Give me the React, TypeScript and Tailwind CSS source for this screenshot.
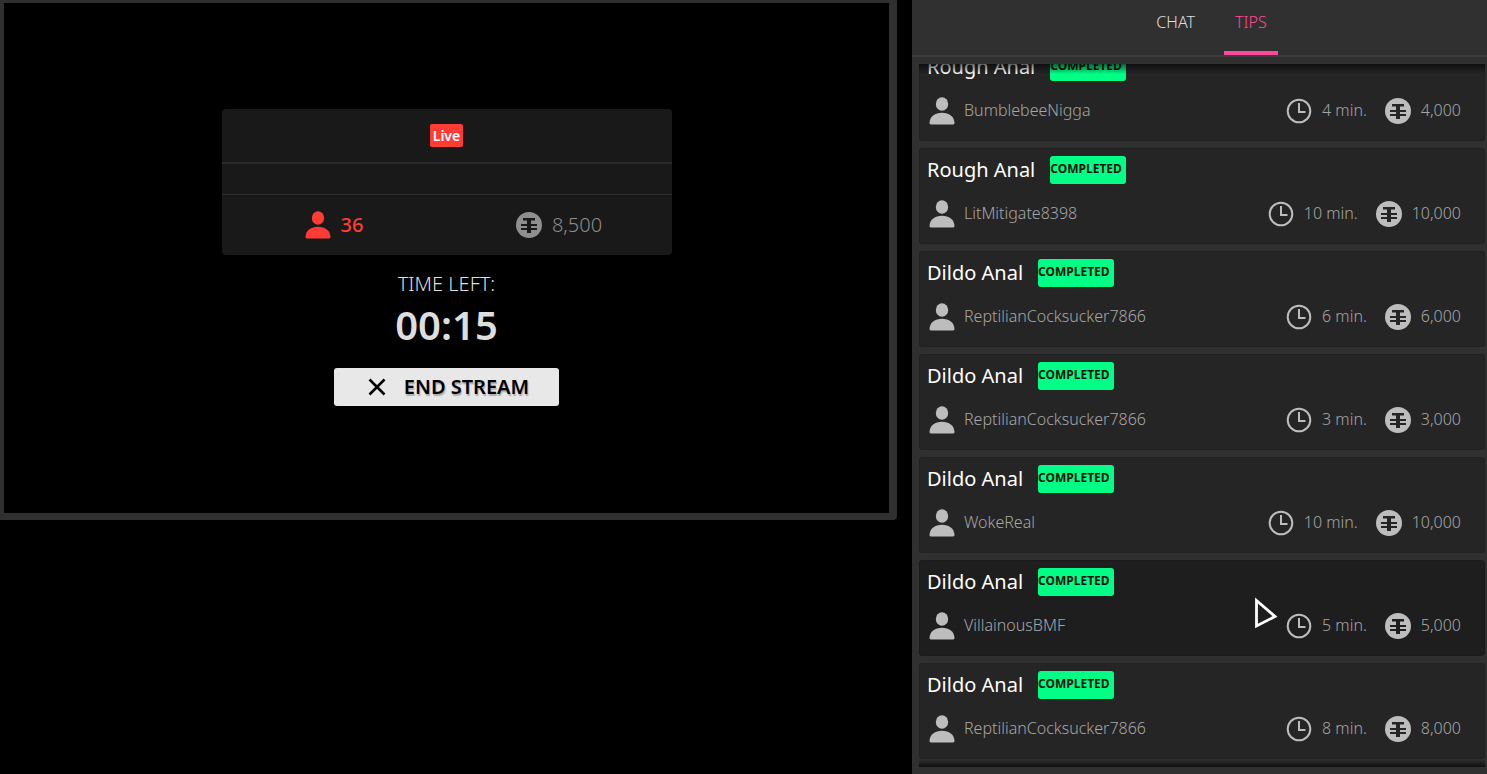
interface Tip {
  id: number
  title: string
  user: string
  minutes: number
  tokens: string
  hovered?: boolean
}

const tips: Tip[] = [
  { id: 1, title: 'Rough Anal', user: 'BumblebeeNigga', minutes: 4, tokens: '4,000' },
  { id: 2, title: 'Rough Anal', user: 'LitMitigate8398', minutes: 10, tokens: '10,000' },
  { id: 3, title: 'Dildo Anal', user: 'ReptilianCocksucker7866', minutes: 6, tokens: '6,000' },
  { id: 4, title: 'Dildo Anal', user: 'ReptilianCocksucker7866', minutes: 3, tokens: '3,000' },
  { id: 5, title: 'Dildo Anal', user: 'WokeReal', minutes: 10, tokens: '10,000' },
  { id: 6, title: 'Dildo Anal', user: 'VillainousBMF', minutes: 5, tokens: '5,000', hovered: true },
  { id: 7, title: 'Dildo Anal', user: 'ReptilianCocksucker7866', minutes: 8, tokens: '8,000' }
]

function UserIcon({ className }: { className: string }) {
  return (
    <svg viewBox="0 0 26 28" className={`h-7 w-[26px] shrink-0 ${className}`} fill="currentColor" aria-hidden="true">
      <ellipse cx="13" cy="7" rx="6.2" ry="6.8" />
      <path d="M.5 26C.8 19.500 6 15.800 13 15.800S25.200 19.500 25.500 26c0 .9-.5 1.400-1.400 1.400H1.900C1 27.400.5 26.900.5 26z" />
    </svg>
  )
}

function ClockIcon() {
  return (
    <svg viewBox="0 0 26 26" className="size-[26px] shrink-0 text-[#bdbdbd]" fill="none" stroke="currentColor" strokeWidth="2" aria-hidden="true">
      <circle cx="13" cy="13" r="11.300" />
      <path d="M13 5v9h6.500" />
    </svg>
  )
}

function TokenIcon({ className, mark }: { className: string; mark: string }) {
  return (
    <svg viewBox="0 0 26 26" className={`size-[26px] shrink-0 ${className}`} aria-hidden="true">
      <circle cx="13" cy="13" r="13" fill="currentColor" />
      <path d="M7 6h12v2.400h-4v3.600h6v2h-6v2h6v2h-6v3h-4v-3H5v-2h6v-2H5v-2h6V8.400H7z" fill={mark} />
    </svg>
  )
}

function StreamPanel() {
  return (
    <main className="min-w-0 flex-1 self-start rounded-br-sm border-t-[3px] border-r-8 border-b-[7px] border-l-4 border-[#303030] bg-black px-6 pt-[106px] pb-[107px]">
      <div className="mx-auto flex max-w-[450px] flex-col items-center">
        <section className="w-full rounded-sm bg-[#191919]">
          <div className="flex justify-center border-b-2 border-[#2a2a2a] py-[15px]">
            <span className="rounded-[2px] bg-[#ff3b36] px-[3px] text-sm leading-[23px] font-semibold text-white">Live</span>
          </div>
          <div className="h-[31px] border-b border-[#2e2e2e]" />
          <div className="grid h-[60px] grid-cols-2 text-xl">
            <div className="flex items-center justify-center gap-2.5 font-medium text-[#ff3b36]">
              <UserIcon className="" />
              <span>36</span>
            </div>
            <div className="flex items-center justify-center gap-2.5 font-light text-[#8c8c8c]">
              <TokenIcon className="text-[#8f8f8f]" mark="#191919" />
              <span>8,500</span>
            </div>
          </div>
        </section>

        <p className="mt-[15px] text-xl leading-7 font-light text-[#dedede]">TIME LEFT:</p>
        <p className="text-[40px] leading-[53px] font-semibold text-[#dedede]">00:15</p>
        <button
          type="button"
          className="mt-[17px] flex h-[38px] w-[225px] items-center justify-center gap-[18px] rounded-[3px] bg-[#e8e8e8] pl-1 text-xl font-semibold text-black"
        >
          <svg viewBox="0 0 18 18" className="size-[18px]" stroke="currentColor" strokeWidth="2.600" aria-hidden="true">
            <path d="M1.500 1.500l15 15M16.500 1.500l-15 15" />
          </svg>
          <span className="[text-shadow:1px_2px_1px_#00000040]">END STREAM</span>
        </button>
      </div>
    </main>
  )
}

function TipCard({ tip }: { tip: Tip }) {
  return (
    <li className={`h-24 shrink-0 rounded-[3px] border px-[7px] pt-[7px] ${tip.hovered ? 'border-[#1b1b1b] bg-[#1e1e1e]' : 'border-[#212121] bg-[#252525]'}`}>
      <div className="flex items-center gap-[15px]">
        <h2 className="text-xl leading-7 text-white">{tip.title}</h2>
        <span className="h-7 w-[76px] rounded-[3px] bg-[#00ff85] text-xs leading-[26px] font-bold text-[#06140c]">COMPLETED</span>
      </div>
      <div className="mt-4 flex items-center pr-4 pl-0.5 text-base leading-[26px] font-light text-[#a6a6a6]">
        <UserIcon className="text-[#bdbdbd]" />
        <span className="ml-[9px] pb-0.5">{tip.user}</span>
        <span className="ml-auto flex items-center gap-2.5">
          <ClockIcon />
          <span className="pb-0.5">{tip.minutes} min.</span>
        </span>
        <span className="ml-[18px] flex items-center gap-2.5">
          <TokenIcon className="text-[#bdbdbd]" mark={tip.hovered ? '#1e1e1e' : '#252525'} />
          <span className="pb-0.5">{tip.tokens}</span>
        </span>
      </div>
    </li>
  )
}

function TipsSidebar() {
  return (
    <aside className="flex h-full w-[575px] shrink-0 flex-col bg-[#303030] pb-[7px]">
      <nav className="flex h-[57px] shrink-0 justify-center gap-[18px] border-b-2 border-[#3c3c3c] pl-6 text-base leading-[45px] font-light">
        <button type="button" className="flex px-[11px] text-[#dedede]">CHAT</button>
        <button type="button" className="flex border-b-4 border-[#ff4a9b] px-[11px] text-[#ff4a9b]">TIPS</button>
      </nav>

      <div className="relative mt-[7px] mr-0.5 ml-[7px] min-h-0 flex-1">
        <ul className="flex h-full flex-col justify-end gap-[7px] overflow-hidden pb-2">
          {tips.map((tip) => (
            <TipCard key={tip.id} tip={tip} />
          ))}
        </ul>
        <div className="pointer-events-none absolute inset-x-0 top-0 h-2.5 bg-linear-to-b from-black/60 to-transparent" />
        <div className="pointer-events-none absolute inset-x-0 bottom-0 h-2 bg-linear-to-t from-black/70 to-transparent" />
      </div>
    </aside>
  )
}

export default function App() {
  return (
    <div className="relative flex h-screen gap-[15px] overflow-hidden bg-black font-['Noto_Sans',sans-serif]">
      <StreamPanel />
      <TipsSidebar />
      {/* Game cursor */}
      <svg viewBox="0 0 28 36" className="pointer-events-none absolute top-[596px] left-[1252px] h-9 w-7" aria-hidden="true">
        <path d="M4.500 4.500v25.500l18.500-9.500z" fill="#1e1e1e" stroke="#fff" strokeWidth="2.800" />
      </svg>
    </div>
  )
}
